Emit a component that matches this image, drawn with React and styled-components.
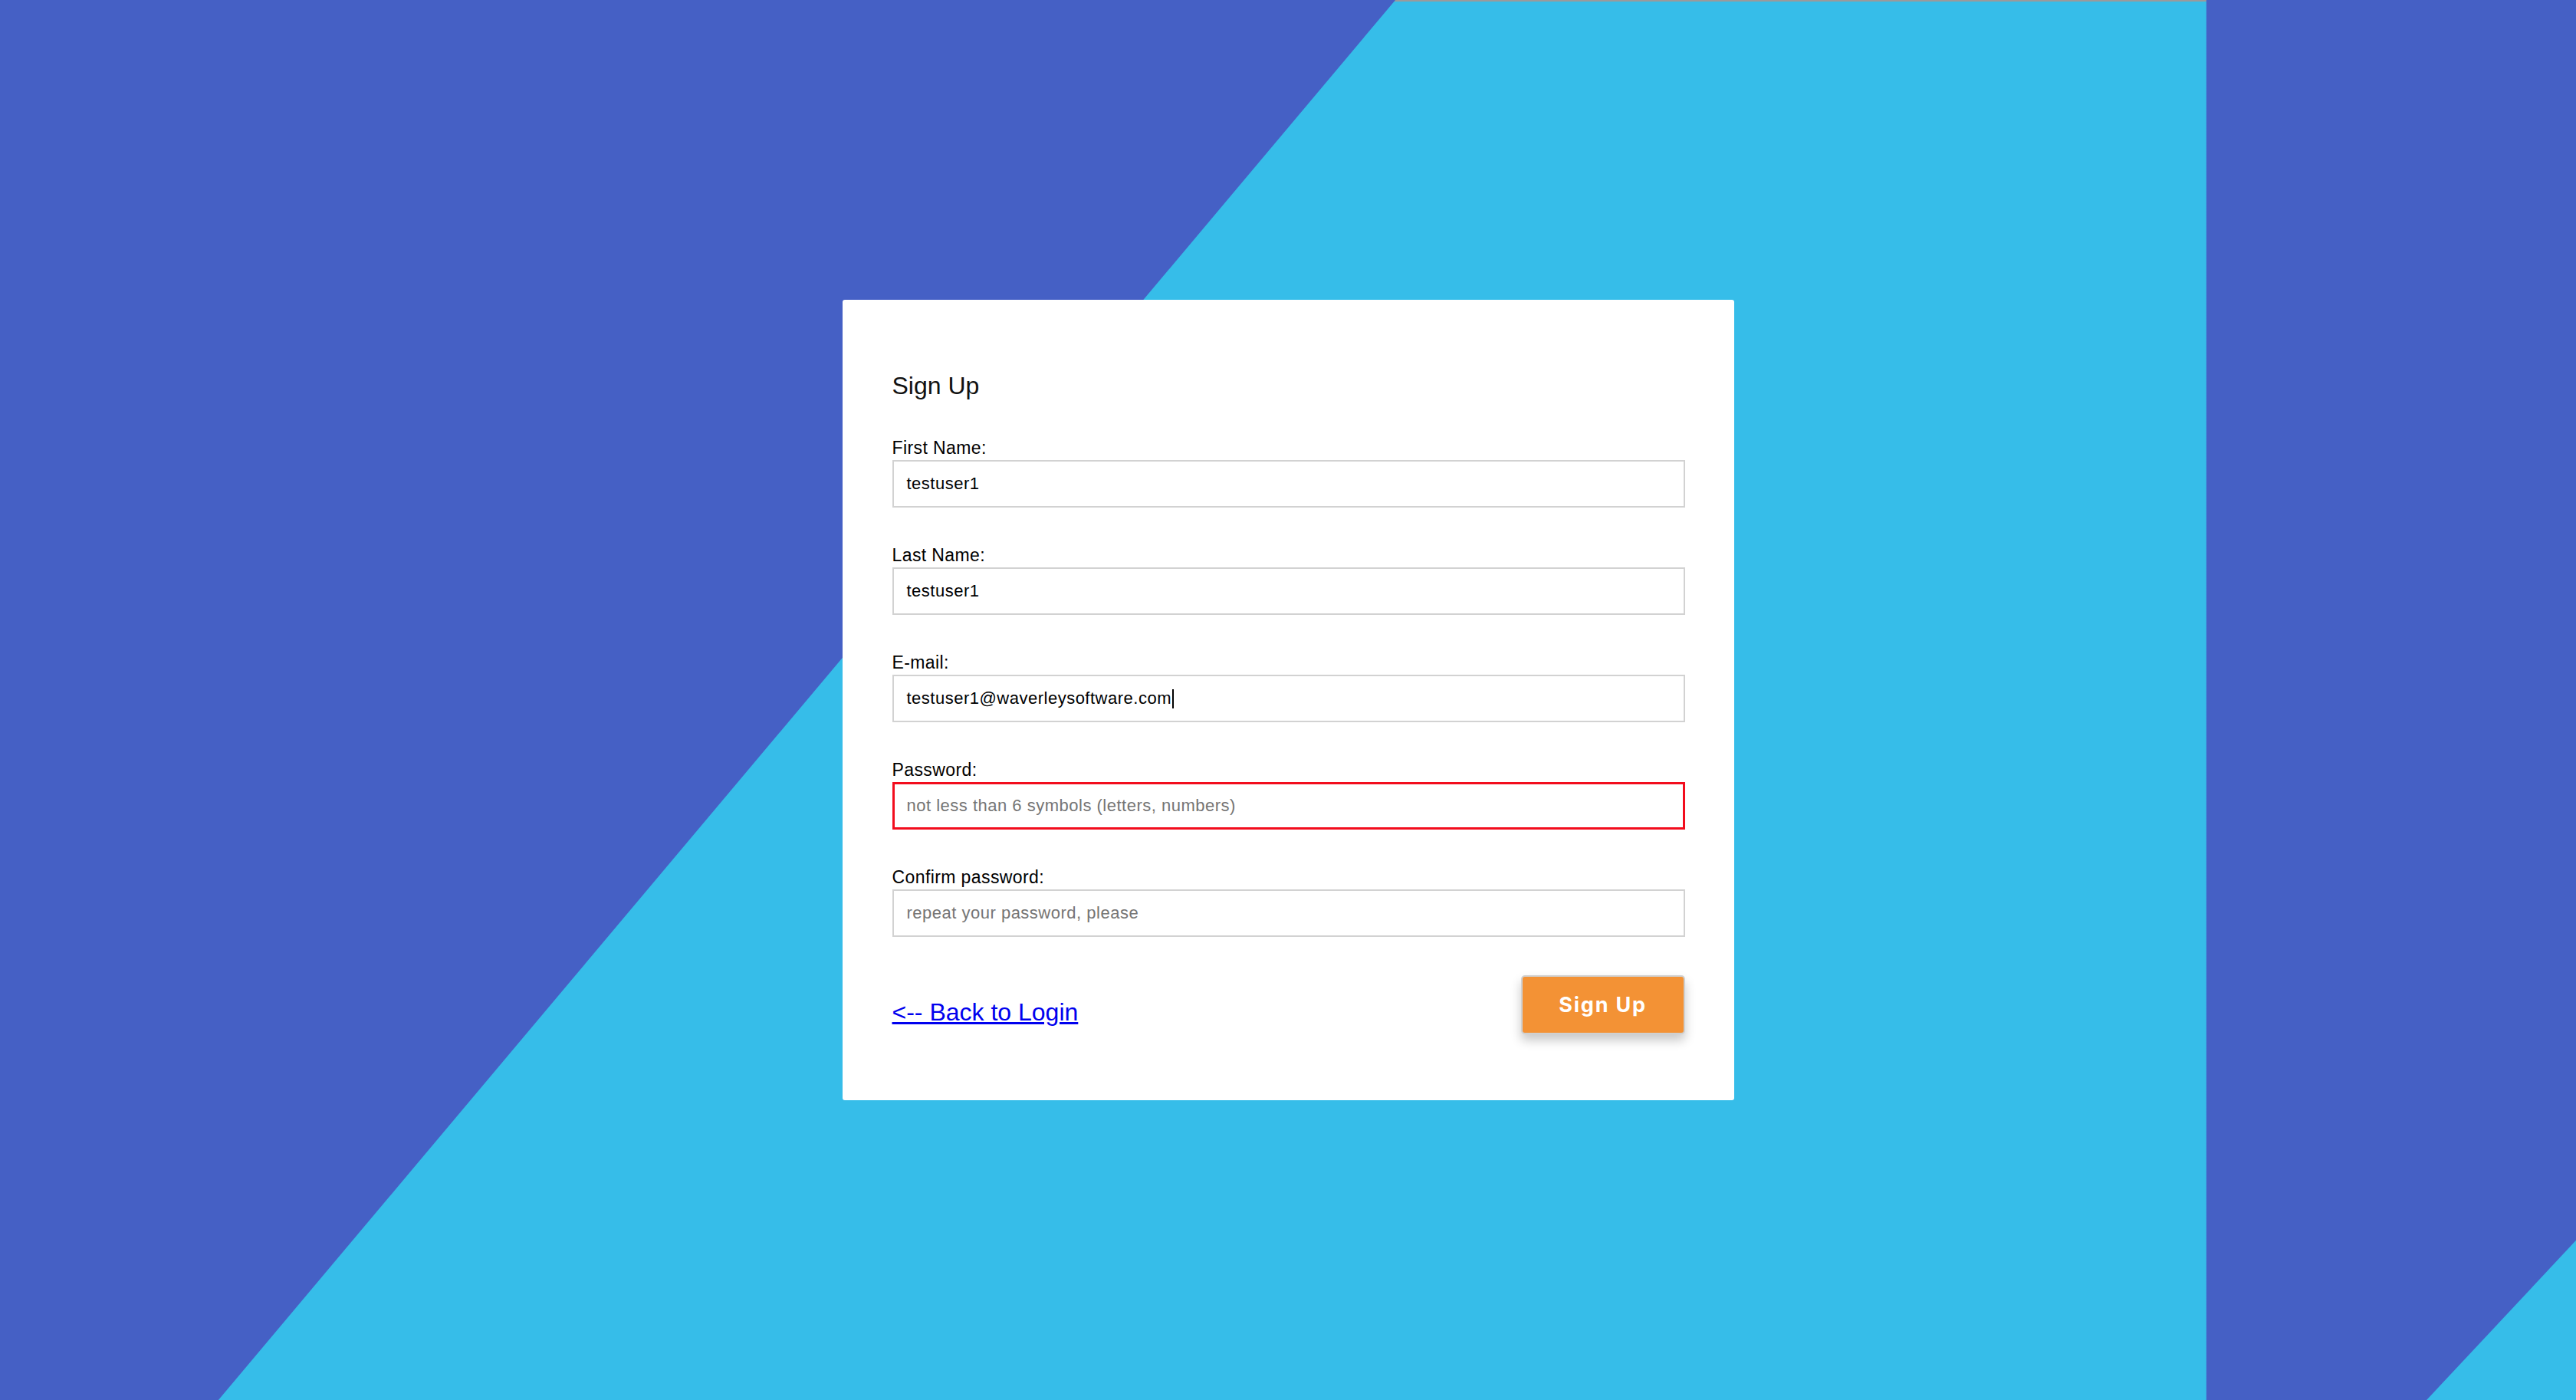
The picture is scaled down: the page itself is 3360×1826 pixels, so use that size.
import React from "react";
import styled, { createGlobalStyle } from "styled-components";

const GlobalStyle = createGlobalStyle`
  html, body {
    margin: 0;
    padding: 0;
  }
  body {
    font-family: "Liberation Sans", Arial, sans-serif;
  }
  * {
    box-sizing: border-box;
  }
`;

// two-tone background: blue base, cyan slanted band + corner wedge
const Page = styled.div`
  position: relative;
  min-height: 100vh;
  display: flex;
  align-items: center;
  justify-content: center;
  background: #4560c5;
  overflow: hidden;

  &::before {
    content: "";
    position: absolute;
    inset: 0;
    background: linear-gradient(#9a9a9a 0 2px, #36bde9 2px);
    clip-path: polygon(54.17% 0, 85.65% 0, 85.65% 100%, 8.48% 100%);
  }

  &::after {
    content: "";
    position: absolute;
    inset: 0;
    background: #36bde9;
    clip-path: polygon(100% 88.6%, 100% 100%, 94.2% 100%);
  }
`;

const Card = styled.form`
  position: relative;
  z-index: 1;
  width: 1163px;
  background: #fff;
  border-radius: 3px;
  padding: 94px 64px 86px 65px;
`;

const Title = styled.h2`
  margin: 0;
  font-size: 32px;
  font-weight: 400;
  line-height: 37px;
  color: #111;
`;

const Field = styled.div`
  margin-top: 50px;
`;

const Label = styled.label`
  display: block;
  font-size: 23px;
  line-height: 25px;
  letter-spacing: 0.4px;
  margin-bottom: 3px;
  color: #000;
`;

const Box = styled.div`
  display: flex;
  align-items: center;
  height: 62px;
  border: ${(props) => (props.$invalid ? "3px solid #f20d1d" : "2px solid #d2d2d2")};
  padding-left: ${(props) => (props.$invalid ? 16 : 17)}px;
  font-size: 22px;
  letter-spacing: 0.5px;
  background: #fff;
`;

const Value = styled.span`
  color: ${(props) => (props.$placeholder ? "#757575" : "#000")};
`;

const Caret = styled.span`
  display: inline-block;
  width: 2px;
  height: 25px;
  margin-left: 1px;
  background: #000;
`;

const Actions = styled.div`
  margin-top: 50px;
  display: flex;
  justify-content: space-between;
  align-items: flex-start;
`;

const BackLink = styled.a`
  margin-top: 30px;
  font-size: 32px;
  line-height: 37px;
  color: #0000ee;
  text-decoration: underline;
`;

const Button = styled.button`
  width: 214px;
  height: 77px;
  background: #f39235;
  border: 2px solid #d0d0d0;
  border-radius: 5px;
  color: #fff;
  font-family: Inter, "Liberation Sans", sans-serif;
  font-weight: 700;
  font-size: 27px;
  letter-spacing: 1.8px;
  box-shadow: 0 8px 14px rgba(0, 0, 0, 0.22);
  cursor: pointer;
`;

const fields = [
  { label: "First Name:", value: "testuser1" },
  { label: "Last Name:", value: "testuser1" },
  { label: "E-mail:", value: "testuser1@waverleysoftware.com", focused: true },
  { label: "Password:", placeholder: "not less than 6 symbols (letters, numbers)", invalid: true },
  { label: "Confirm password:", placeholder: "repeat your password, please" },
];

const App = () => {
  return (
    <Page>
      <GlobalStyle />
      <Card onSubmit={(e) => e.preventDefault()}>
        <Title>Sign Up</Title>
        {fields.map((f) => (
          <Field key={f.label}>
            <Label>{f.label}</Label>
            <Box $invalid={f.invalid}>
              <Value $placeholder={!f.value}>{f.value || f.placeholder}</Value>
              {f.focused && <Caret />}
            </Box>
          </Field>
        ))}
        <Actions>
          <BackLink href="#">&lt;-- Back to Login</BackLink>
          <Button type="submit">Sign Up</Button>
        </Actions>
      </Card>
    </Page>
  );
};

export default App;
